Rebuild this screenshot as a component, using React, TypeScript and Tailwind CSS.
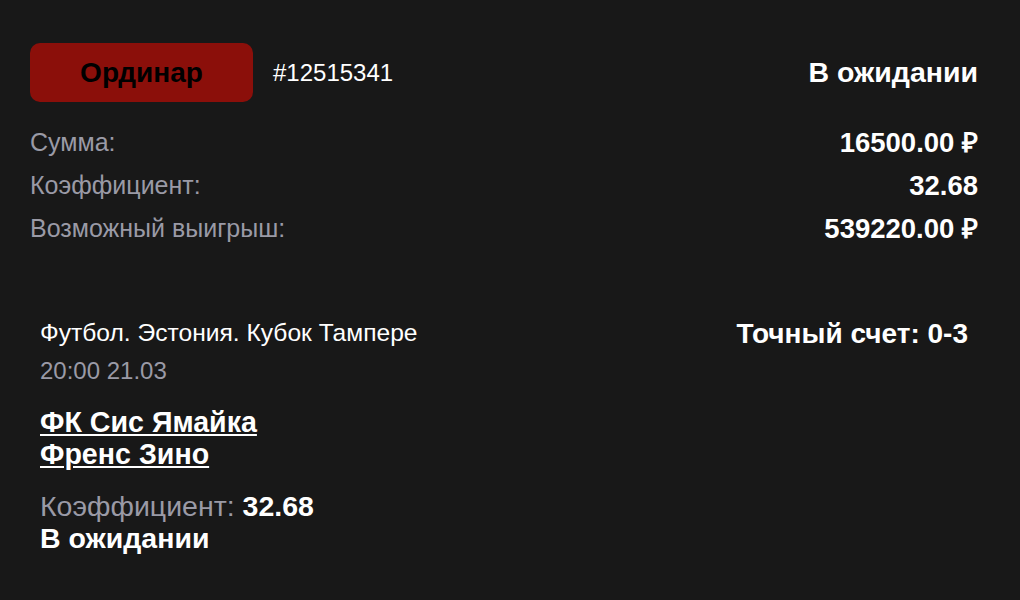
export default function App() {
  return (
    <div
      className="min-h-[600px] w-full bg-[#181818] text-white"
      style={{ fontFamily: '"Liberation Sans", Arial, sans-serif' }}
    >
      <div className="px-[30px] pt-[43px] pr-[42px]">
        <div className="flex items-center justify-between">
          <div className="flex items-center gap-5">
            <div className="flex h-[59px] w-[223px] items-center justify-center rounded-[10px] bg-[#8b0f0a] text-[28px] font-bold text-black">
              Ординар
            </div>
            <span className="text-[24px]">#12515341</span>
          </div>
          <span className="text-[28.5px] font-bold">В ожидании</span>
        </div>

        <div className="mt-[19px] flex flex-col">
          <div className="flex h-[43px] items-center justify-between">
            <span className="text-[25px] text-[#9a9aa6]">Сумма:</span>
            <span className="text-[27.5px] font-bold">16500.00 ₽</span>
          </div>
          <div className="flex h-[43px] items-center justify-between">
            <span className="text-[25px] text-[#9a9aa6]">Коэффициент:</span>
            <span className="text-[27.5px] font-bold">32.68</span>
          </div>
          <div className="flex h-[43px] items-center justify-between">
            <span className="text-[25px] text-[#9a9aa6]">Возможный выигрыш:</span>
            <span className="text-[27.5px] font-bold">539220.00 ₽</span>
          </div>
        </div>
      </div>

      <div className="mt-[68px] flex justify-between pl-[40px] pr-[52px]">
        <div className="flex flex-col">
          <span className="text-[24.6px] leading-[30px]">Футбол. Эстония. Кубок Тампере</span>
          <span className="mt-[8px] text-[24px] leading-[30px] text-[#9a9aa6]">20:00 21.03</span>
          <div className="mt-[20px] flex flex-col text-[28.6px] font-bold leading-[32px]">
            <a className="underline underline-offset-2">ФК Сис Ямайка</a>
            <a className="underline underline-offset-2">Френс Зино</a>
          </div>
          <div className="mt-[20px] text-[28.5px] leading-[32px]">
            <span className="text-[#9a9aa6]">Коэффициент: </span>
            <span className="font-bold">32.68</span>
          </div>
          <span className="text-[28.5px] font-bold leading-[32px]">В ожидании</span>
        </div>
        <span className="text-[28px] font-bold leading-[32px]">Точный счет: 0-3</span>
      </div>
    </div>
  );
}
